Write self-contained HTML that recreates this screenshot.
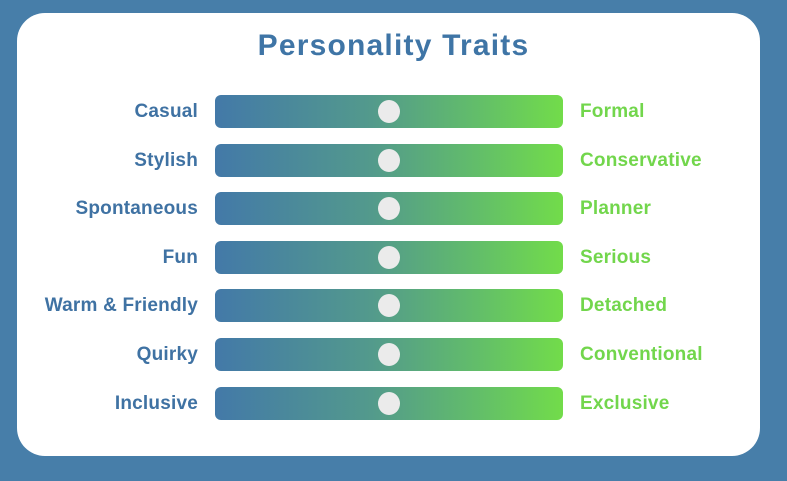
<!DOCTYPE html>
<html><head><style>
body{margin:0;width:787px;height:481px;background:#477ea9;position:relative;overflow:hidden;font-family:"Liberation Sans",sans-serif}
.card{position:absolute;left:17px;top:13px;width:743px;height:443px;background:#fff;border-radius:28px}
h1{position:absolute;left:0;width:787px;top:29px;margin:0;text-align:center;font-size:30px;color:#3f75a6;font-weight:bold;letter-spacing:1.2px}
.row{position:absolute;left:0;width:787px;height:34px}
.l{position:absolute;right:589px;top:6px;font-size:19px;font-weight:bold;color:#3f72a3;white-space:nowrap;letter-spacing:0.2px}
.r{position:absolute;left:580px;top:6px;font-size:19px;font-weight:bold;color:#72d64c;white-space:nowrap;letter-spacing:0.2px}
.bar{position:absolute;left:215px;width:348px;top:0;height:33px;border-radius:6px;background:linear-gradient(90deg,#4379a8,#539a8c 45%,#62bd6a 75%,#72dc4a)}
.k{position:absolute;left:378px;top:5px;width:22px;height:23px;border-radius:50%;background:#ebebeb}
</style></head><body>
<div class="card"></div>
<h1>Personality Traits</h1>
<div class="row" style="top:95px"><span class="l">Casual</span><div class="bar"></div><div class="k"></div><span class="r">Formal</span></div>
<div class="row" style="top:144px"><span class="l">Stylish</span><div class="bar"></div><div class="k"></div><span class="r">Conservative</span></div>
<div class="row" style="top:192px"><span class="l">Spontaneous</span><div class="bar"></div><div class="k"></div><span class="r">Planner</span></div>
<div class="row" style="top:241px"><span class="l">Fun</span><div class="bar"></div><div class="k"></div><span class="r">Serious</span></div>
<div class="row" style="top:289px"><span class="l">Warm &amp; Friendly</span><div class="bar"></div><div class="k"></div><span class="r">Detached</span></div>
<div class="row" style="top:338px"><span class="l">Quirky</span><div class="bar"></div><div class="k"></div><span class="r">Conventional</span></div>
<div class="row" style="top:387px"><span class="l">Inclusive</span><div class="bar"></div><div class="k"></div><span class="r">Exclusive</span></div>
</body></html>
